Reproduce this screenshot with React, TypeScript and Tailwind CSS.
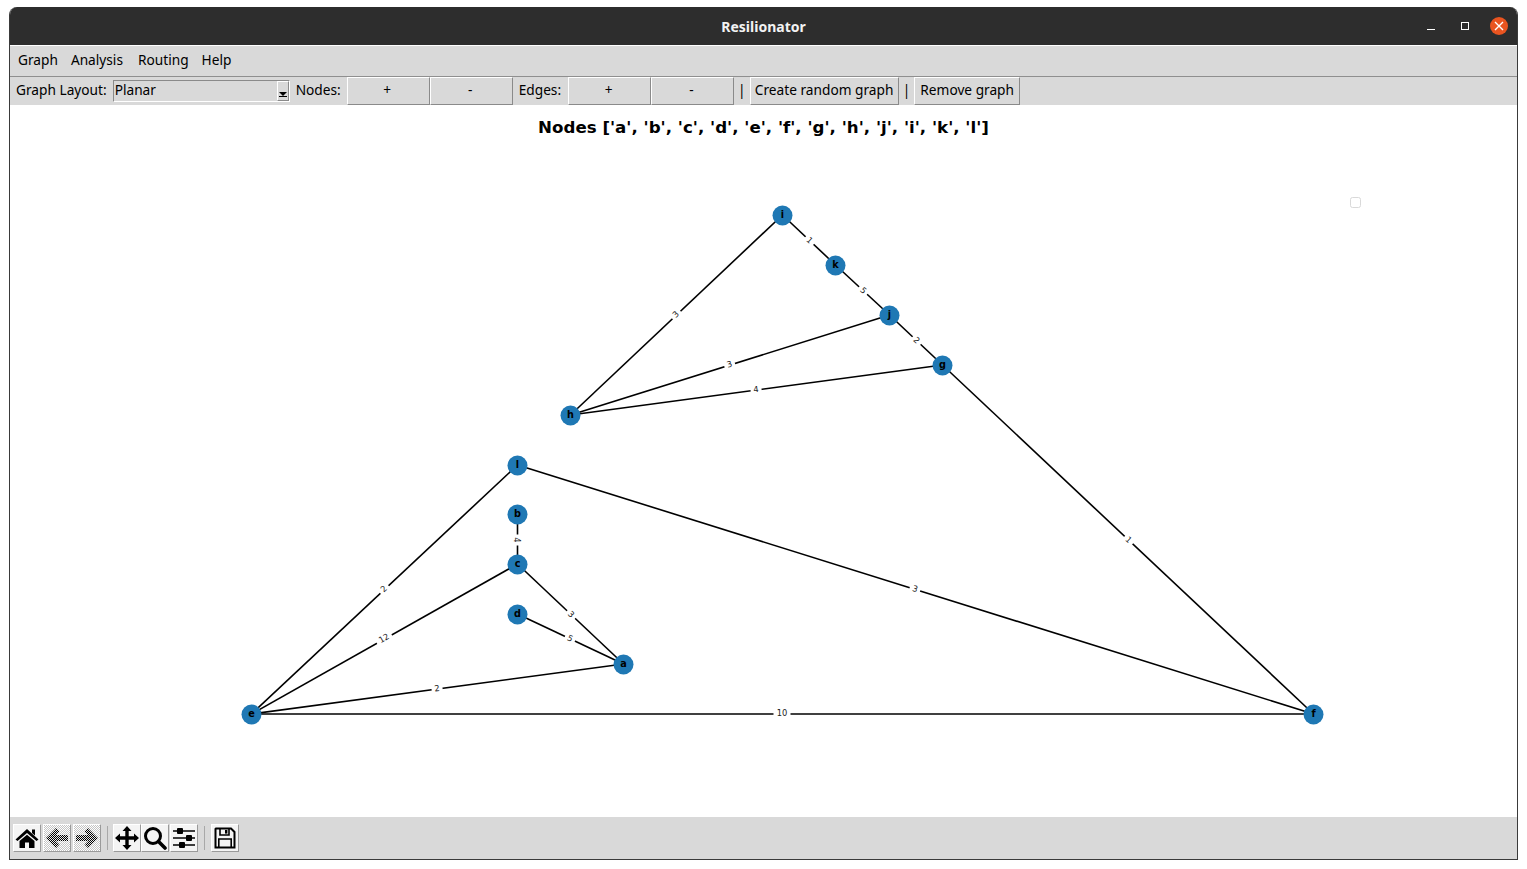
import React from 'react';

const uiFont = "font-['DejaVu_Sans',sans-serif]";
const tkFont = "font-['Noto_Sans',sans-serif] text-[13.7px]";

const nodes: Record<string, [number, number]> = {
    a: [623, 664],
    b: [517, 514],
    c: [517, 564],
    d: [517, 614],
    e: [251, 714],
    f: [1313, 714],
    g: [942, 365],
    h: [570, 415],
    i: [782, 215],
    j: [889, 315],
    k: [835, 265],
    l: [517, 465],
};

const edges: [string, string, string][] = [
    ['i', 'k', '1'],
    ['k', 'j', '5'],
    ['j', 'g', '2'],
    ['g', 'f', '1'],
    ['i', 'h', '3'],
    ['j', 'h', '3'],
    ['g', 'h', '4'],
    ['l', 'e', '2'],
    ['l', 'f', '3'],
    ['b', 'c', '4'],
    ['c', 'a', '3'],
    ['c', 'e', '12'],
    ['d', 'a', '5'],
    ['a', 'e', '2'],
    ['e', 'f', '10'],
];

function edgeAngle(x1: number, y1: number, x2: number, y2: number) {
    let angle = (Math.atan2(y2 - y1, x2 - x1) * 180) / Math.PI;
    if (angle > 90) angle -= 180;
    if (angle < -90) angle += 180;
    return angle;
}

function GraphPlot() {
    return (
        <svg viewBox="9.5 104.5 1507 712" className="absolute inset-0 h-full w-full">
            {edges.map(([from, to]) => {
                const [x1, y1] = nodes[from];
                const [x2, y2] = nodes[to];
                return (
                    <line
                        key={from + to}
                        x1={x1}
                        y1={y1 - 0.5}
                        x2={x2}
                        y2={y2 - 0.5}
                        stroke="#000"
                        strokeWidth="1.6"
                    />
                );
            })}
            {edges.map(([from, to, weight]) => {
                const [x1, y1] = nodes[from];
                const [x2, y2] = nodes[to];
                const mx = (x1 + x2) / 2 - 0.5;
                const my = (y1 + y2) / 2 - 1;
                const w = weight.length > 1 ? 15 : 9;
                const angle = edgeAngle(x1, y1, x2, y2);
                const nudge = angle > 30 ? 1.5 : 0;
                return (
                    <g key={from + to} transform={`translate(${mx} ${my}) rotate(${angle})`}>
                        <rect x={nudge - w / 2 - 1} y={-6} width={w + 2} height={12} fill="#fff" />
                        <text
                            x={nudge}
                            y={2.6}
                            textAnchor="middle"
                            fontSize="8.33"
                            fill="#222"
                            fontFamily="DejaVu Sans, sans-serif"
                        >
                            {weight}
                        </text>
                    </g>
                );
            })}
            {Object.entries(nodes).map(([name, [x, y]]) => (
                <g key={name}>
                    <circle cx={x} cy={y} r={10} fill="#1f78b4" />
                    <text
                        x={x}
                        y={y + 2.4}
                        textAnchor="middle"
                        fontSize="9.7"
                        fontWeight="700"
                        fill="#000"
                        fontFamily="DejaVu Sans, sans-serif"
                    >
                        {name}
                    </text>
                </g>
            ))}
            <rect x="1350" y="197" width="10" height="10" rx="2" fill="#fff" stroke="#d9d9d9" />
        </svg>
    );
}

function FlatButton({ label, widthClass }: { label: string; widthClass: string }) {
    return (
        <button
            className={`flex h-[28px] shrink-0 items-center justify-center border border-t-white border-l-white border-r-[#8a8a8a] border-b-[#8a8a8a] bg-[#d9d9d9] pb-[2px] text-black ${widthClass}`}
        >
            {label}
        </button>
    );
}

function ToolButton({ children }: { children: React.ReactNode }) {
    return (
        <div className="flex h-[28px] w-[28px] items-center justify-center border border-t-white border-l-white border-r-[#9a9a9a] border-b-[#9a9a9a] bg-[#f4f4f4]">
            {children}
        </div>
    );
}

function HomeIcon() {
    return (
        <svg width="24" height="24" viewBox="0 0 24 24">
            <path d="M12 3 L23.5 13.5 L21.5 15 L12 7 L2.5 15 L0.5 13.5 Z" fill="#000" />
            <path d="M17 3.5 H20 V9.5 L17 7 Z" fill="#000" />
            <path d="M4.5 15 L12 8.8 L19.5 15 V22 H14 V16.5 H10 V22 H4.5 Z" fill="#000" />
        </svg>
    );
}

function ArrowIcon({ flip }: { flip?: boolean }) {
    const id = flip ? 'R' : 'L';
    return (
        <svg width="26" height="26" viewBox="0 0 26 26" className={flip ? '-scale-x-100' : ''}>
            <defs>
                <pattern id={`light${id}`} width="2" height="2" patternUnits="userSpaceOnUse">
                    <rect width="2" height="2" fill="#fff" />
                    <rect width="1" height="1" fill="#c4c4c4" />
                    <rect x="1" y="1" width="1" height="1" fill="#c4c4c4" />
                </pattern>
                <pattern id={`dark${id}`} width="2" height="2" patternUnits="userSpaceOnUse">
                    <rect width="2" height="2" fill="#e8e8e8" />
                    <rect width="1" height="1" fill="#000" />
                    <rect x="1" y="1" width="1" height="1" fill="#000" />
                </pattern>
            </defs>
            <rect width="26" height="26" fill={`url(#light${id})`} />
            <path
                d="M12 3 L15.5 6.5 L12 10 H24 V16 H12 L15.5 19.5 L12 23 L2 13 Z"
                fill={`url(#dark${id})`}
            />
        </svg>
    );
}

function MoveIcon() {
    return (
        <svg width="24" height="24" viewBox="0 0 24 24">
            <path
                d="M12 0 L16.5 5 H13.7 V10.3 H19 V7.5 L24 12 L19 16.5 V13.7 H13.7 V19 H16.5 L12 24 L7.5 19 H10.3 V13.7 H5 V16.5 L0 12 L5 7.5 V10.3 H10.3 V5 H7.5 Z"
                fill="#000"
            />
        </svg>
    );
}

function ZoomIcon() {
    return (
        <svg width="24" height="24" viewBox="0 0 24 24">
            <circle cx="10" cy="10" r="7.5" fill="none" stroke="#000" strokeWidth="3" />
            <path d="M15.5 15.5 L22 22" stroke="#000" strokeWidth="3.6" strokeLinecap="round" />
        </svg>
    );
}

function SlidersIcon() {
    return (
        <svg width="24" height="24" viewBox="0 0 24 24">
            <path d="M1 5 H23 M1 12 H23 M1 19 H23" stroke="#000" strokeWidth="1.6" />
            <rect x="5" y="2" width="6" height="6" rx="1" fill="#000" />
            <rect x="14" y="9" width="6" height="6" rx="1" fill="#000" />
            <rect x="7" y="16" width="6" height="6" rx="1" fill="#000" />
        </svg>
    );
}

function SaveIcon() {
    return (
        <svg width="22" height="22" viewBox="0 0 22 22">
            <path d="M2 1.5 H17 L20.5 5 V20.5 H1.5 V2 Z" fill="none" stroke="#000" strokeWidth="2" />
            <path d="M6 2 V8 H15 V2" fill="none" stroke="#000" strokeWidth="1.6" />
            <rect x="11" y="3" width="2.4" height="3.6" fill="#000" />
            <path d="M4.8 20 V12 H17.2 V20" fill="none" stroke="#000" strokeWidth="1.6" />
        </svg>
    );
}

export default function App() {
    return (
        <div className={`h-[869px] w-[1527px] overflow-hidden bg-white pt-[7px] pl-[9px] ${uiFont}`}>
            <div className="flex h-[853px] w-[1509px] flex-col overflow-hidden rounded-t-[8px] border-x border-b border-[#3a3a3a] bg-white">
                <header className="relative flex h-[38px] shrink-0 items-center justify-center bg-[#2d2d2d] pt-[1px]">
                    <span className="font-['Noto_Sans',sans-serif] text-[14px] font-bold text-[#f2f2f2]">Resilionator</span>
                    <div className="absolute top-0 right-0 flex h-full items-center">
                        <div className="mt-[7px] mr-[26px] h-[1px] w-[8px] bg-white" />
                        <div className="mr-[21px] h-[8px] w-[8px] border border-white" />
                        <div className="mr-[9px] flex h-[18px] w-[18px] items-center justify-center rounded-full bg-[#e95420]">
                            <svg width="10" height="10" viewBox="0 0 10 10">
                                <path d="M1 1 L9 9 M9 1 L1 9" stroke="#fff" strokeWidth="1.4" />
                            </svg>
                        </div>
                    </div>
                </header>
                <nav className={`flex h-[32px] shrink-0 items-center gap-[13px] border-t border-t-white border-b border-b-[#8f8f8f] bg-[#d9d9d9] pb-[2px] pl-[8px] text-black ${tkFont}`}>
                    <span>Graph</span>
                    <span>Analysis</span>
                    <span className="ml-[2px]">Routing</span>
                    <span>Help</span>
                </nav>
                <div className={`flex h-[28px] shrink-0 items-center bg-[#d9d9d9] pl-[6px] text-black ${tkFont}`}>
                    <span className="pb-[2px]">Graph Layout:</span>
                    <div className="ml-[6px] flex h-[22px] w-[177px] items-center justify-between border border-t-[#8a8a8a] border-l-[#8a8a8a] border-r-white border-b-white pl-[1px]">
                        <span className="pb-[2px]">Planar</span>
                        <div className="flex h-[20px] w-[12px] items-end justify-center border border-t-white border-l-white border-r-[#8a8a8a] border-b-[#8a8a8a] pb-[3px]">
                            <svg width="8" height="5" viewBox="0 0 8 5">
                                <path d="M0 0 H8 L4 4 Z M0 4 H8 V5 H0 Z" fill="#000" />
                            </svg>
                        </div>
                    </div>
                    <span className="mr-[6px] ml-[6px] pb-[2px]">Nodes:</span>
                    <FlatButton label="+" widthClass="w-[83px] pr-[2px]" />
                    <FlatButton label="-" widthClass="w-[83px] pr-[2px]" />
                    <span className="mr-[7px] ml-[6px] pb-[2px]">Edges:</span>
                    <FlatButton label="+" widthClass="w-[83px] pr-[2px]" />
                    <FlatButton label="-" widthClass="w-[83px] pr-[2px]" />
                    <span className="mx-[4px] pb-[2px]">|</span>
                    <FlatButton label="Create random graph" widthClass="w-[149px]" />
                    <span className="mx-[4px] pb-[2px]">|</span>
                    <FlatButton label="Remove graph" widthClass="w-[106px]" />
                </div>
                <main className="relative min-h-0 flex-1 bg-white">
                    <GraphPlot />
                    <h1 className="relative pt-[11px] text-center text-[16.67px] leading-[24px] font-bold text-black">
                        Nodes ['a', 'b', 'c', 'd', 'e', 'f', 'g', 'h', 'j', 'i', 'k', 'l']
                    </h1>
                </main>
                <footer className="flex h-[42px] shrink-0 items-center bg-[#d9d9d9] pl-[3px]">
                    <div className="flex gap-[2px]">
                        <ToolButton>
                            <HomeIcon />
                        </ToolButton>
                        <ToolButton>
                            <ArrowIcon />
                        </ToolButton>
                        <ToolButton>
                            <ArrowIcon flip />
                        </ToolButton>
                    </div>
                    <div className="mr-[5px] ml-[6px] h-[24px] w-[1px] bg-[#a8a8a8]" />
                    <div className="flex">
                        <ToolButton>
                            <MoveIcon />
                        </ToolButton>
                        <ToolButton>
                            <ZoomIcon />
                        </ToolButton>
                        <div className="ml-[1px]">
                            <ToolButton>
                                <SlidersIcon />
                            </ToolButton>
                        </div>
                    </div>
                    <div className="mx-[6px] h-[24px] w-[1px] bg-[#a8a8a8]" />
                    <ToolButton>
                        <SaveIcon />
                    </ToolButton>
                </footer>
            </div>
        </div>
    );
}
